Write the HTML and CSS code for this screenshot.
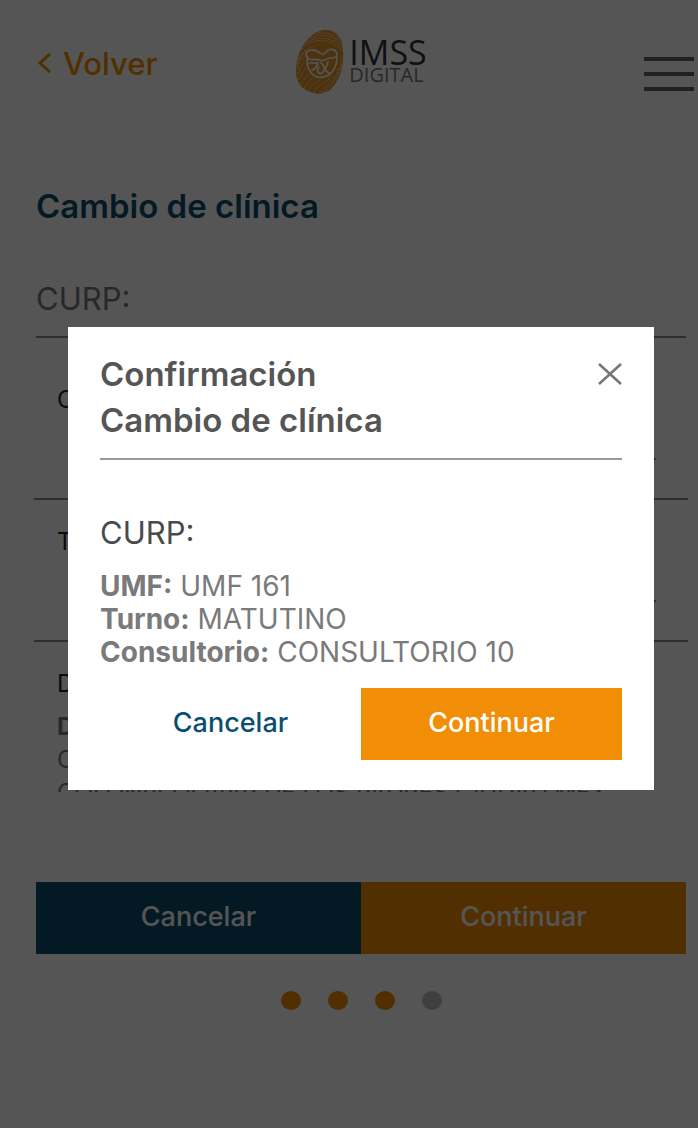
FILE: index.html
```html
<!DOCTYPE html>
<html lang="es">
	<head>
		<meta charset="utf-8">
		<meta name="viewport" content="width=device-width, initial-scale=1.0">
		<title>IMSS Digital - Cambio de clínica</title>
		<link rel="stylesheet" href="styles.css">
	</head>
	<body>
		<header class="topbar">
			<a class="back" href="#">
				<svg width="14" height="20" viewBox="0 0 14 20" aria-hidden="true"><path d="M12 1L2 10l10 9" fill="none" stroke="currentColor" stroke-width="3"/></svg>
				Volver
			</a>
			<div class="logo">
				<svg class="logo-print" width="50" height="66" viewBox="0 0 50 66" aria-hidden="true">
					<defs>
						<clipPath id="finger"><path d="M29 1C39 0 48 7 48 22c1 14-2 25-8 33-4 6-8 9-11 8-3 2-6 3-9 1C8 63 0 53 1 40 2 22 13 3 29 1z"/></clipPath>
					</defs>
					<g clip-path="url(#finger)">
						<rect width="50" height="66" fill="#e8962a"/>
						<g fill="none" stroke="#fbe3bd" stroke-width="0.8" stroke-dasharray="5 1 3 1">
							<path d="M12 8c12-7 25-5 35 4"/>
							<path d="M10 12c12-9 28-7 38 4"/>
							<path d="M8 16c12-11 31-8 41 4"/>
							<path d="M6 21c12-15 33-11 43 3"/>
							<path d="M3 31c6-10 10-12 15-14"/>
							<path d="M2 36c2-7 4-10 9-14"/>
							<path d="M2 41c1-6 3-11 8-14"/>
							<path d="M2 46c3-5 4-10 8-14"/>
							<path d="M3 51c4-6 6-9 8-13"/>
							<path d="M5 56c4-6 7-9 9-12"/>
							<path d="M9 60c3-6 5-8 9-12"/>
							<path d="M13 63c3-7 7-9 12-12"/>
							<path d="M18 65c4-9 10-9 18-17"/>
							<path d="M24 65c5-8 14-10 20-25"/>
							<path d="M30 63c7-7 14-15 17-28"/>
							<path d="M44 42c2-5 3-10 3-16"/>
						</g>
					</g>
					<!-- eagle and mother -->
					<g fill="none" stroke="#fff" stroke-width="1.7" stroke-linecap="round" stroke-linejoin="round">
						<path d="M13 22c-3 2-2 6 1 8 4 2 7-1 10 1 4 2 7-1 11-2 6 0 8-2 7-5-2-4-7-5-10-2-2 3-4 4-7 2-4-3-8-4-12-2z"/>
						<path d="M12 30c0 7 2 14 8 17 5 3 10 1 14-1 5-4 8-10 8-18"/>
						<path d="M14 34h9c-1 4-3 6-6 7M26 34c5 4 4 9-1 11-3-2-3-5-1-7M33 33l-3 8 5 4"/>
					</g>
				</svg>
				<div class="logo-text">
					<span class="logo-name">IMSS</span>
					<span class="logo-sub">DIGITAL</span>
				</div>
			</div>
			<button class="hamburger" type="button" aria-label="Menú">
				<span></span>
				<span></span>
				<span></span>
			</button>
		</header>

		<main class="page">
			<h1 class="page-title">Cambio de clínica</h1>
			<p class="curp page-curp">CURP:</p>

			<div class="list">
				<div class="item">
					<label for="clinica">Clínica</label>
					<select id="clinica"></select>
				</div>
				<div class="item">
					<label for="turno">Turno</label>
					<select id="turno"></select>
				</div>
				<div class="item">
					<h2 class="item-title">Datos de la clínica</h2>
					<p class="address"><b>Dirección:</b><br>CALLE AV TOLUCA<br>COLONIA OLIVAR DE LOS PADRES CIUDAD MEX</p>
				</div>
			</div>

			<div class="actions page-actions">
				<button class="btn btn-blue" type="button">Cancelar</button>
				<button class="btn btn-orange" type="button">Continuar</button>
			</div>

			<div class="steps">
				<span class="dot"></span>
				<span class="dot"></span>
				<span class="dot"></span>
				<span class="dot dot-off"></span>
			</div>
		</main>

		<div class="overlay">
			<div class="modal" role="dialog" aria-modal="true" aria-labelledby="modal-title">
				<div class="modal-header">
					<h2 class="modal-title" id="modal-title">Confirmación<br>Cambio de clínica</h2>
					<button class="close" type="button" aria-label="Cerrar">
						<svg width="24" height="22" viewBox="0 0 24 22" aria-hidden="true"><path d="M1 1l22 20M23 1L1 21" stroke="currentColor" stroke-width="2.6"/></svg>
					</button>
				</div>
				<p class="curp modal-curp">CURP:</p>
				<p class="details">
					<b>UMF:</b> UMF 161<br>
					<b>Turno:</b> MATUTINO<br>
					<b>Consultorio:</b> CONSULTORIO 10
				</p>
				<div class="actions">
					<button class="btn btn-plain" type="button">Cancelar</button>
					<button class="btn btn-orange" type="button">Continuar</button>
				</div>
			</div>
		</div>
	</body>
</html>
```

FILE: styles.css
```css
* {
	margin:0;
	padding:0;
	box-sizing: border-box;
}
body {
	font-family: Inter, "Liberation Sans", sans-serif;
	font-size: 27px;
	line-height: 33px;
	color: #7a7a7a;
	background-color: #fff;
}
button, select {
	font-family: inherit;
	font-size: inherit;
	border: none;
	background: none;
}

/* header */
.topbar {
	display: grid;
	grid-template-columns: 1fr auto 1fr;
	align-items: center;
	padding: 29px 4px 0 28px;
}
.back {
	display: flex;
	align-items: center;
	gap: 11px;
	padding: 2px 0 0 10px;
	font-size: 31px;
	font-weight: 500;
	color: #f28e05;
	text-decoration: none;
}
.logo {
	display: flex;
	align-items: center;
	gap: 4px;
}
.logo-text {
	display: flex;
	flex-direction: column;
	padding-bottom: 4px;
	font-family: "Open Sans", sans-serif;
}
.logo-name {
	font-size: 34px;
	line-height: 30px;
	color: #333;
}
.logo-sub {
	font-size: 20px;
	line-height: 16px;
	color: #777;
}
.hamburger {
	display: flex;
	flex-direction: column;
	gap: 11px;
	width: 50px;
	padding-bottom: 4px;
	justify-self: end;
	align-self: end;
}
.hamburger span {
	height: 4px;
	background-color: #646464;
}

/* page */
.page {
	padding: 88px 12px 40px 36px;
}
.page-title {
	font-size: 33px;
	line-height: 46px;
	font-weight: 600;
	color: #0b4f70;
}
.curp {
	font-size: 31px;
	line-height: 46px;
}
.page-curp {
	margin-top: 47px;
	padding-bottom: 14px;
	border-bottom: 2px solid #8a8a8a;
}
.list {
	height: 454px;
	margin: 0 -2px;
	padding-top: 20px;
	overflow: hidden;
}
.item {
	padding: 25px 32px 38px 23px;
	border-bottom: 2px solid #8a8a8a;
}
.item label, .item-title {
	display: block;
	font-size: 24px;
	font-weight: 400;
	line-height: 33px;
	color: #222;
}
.item select {
	display: block;
	width: calc(100% - 12px);
	height: 44px;
	margin-left: 12px;
	border-bottom: 2px solid #8a8a8a;
}
.address {
	margin-top: 10px;
	font-size: 24px;
}

/* buttons */
.actions {
	display: flex;
}
.page-actions {
	margin-top: 90px;
}
.btn {
	flex: 1;
	height: 72px;
	padding-bottom: 4px;
	font-weight: 500;
	color: #fff;
}
.btn-blue {
	background-color: #0b4f70;
}
.btn-orange {
	background-color: #f28e05;
}
.btn-plain {
	color: #0b4f70;
}
.steps {
	display: flex;
	justify-content: center;
	gap: 27px;
	margin-top: 37px;
}
.dot {
	width: 20px;
	height: 19px;
	border-radius: 50%;
	background-color: #f28e05;
}
.dot-off {
	background-color: #bdbdbd;
}

/* confirmation */
.overlay {
	position: fixed;
	top: 0;
	right: 0;
	bottom: 0;
	left: 0;
	display: flex;
	align-items: center;
	padding: 0 44px 11px 68px;
	background-color: rgba(0,0,0,0.667);
}
.modal {
	flex: 1;
	padding: 24px 32px 30px;
	background-color: #fff;
}
.modal-header {
	display: flex;
	justify-content: space-between;
	align-items: flex-start;
	padding-bottom: 15px;
	border-bottom: 2px solid #999;
}
.modal-title {
	font-size: 33px;
	line-height: 46px;
	font-weight: 600;
	color: #555;
}
.close {
	display: flex;
	align-items: center;
	height: 46px;
	color: #777;
}
.modal-curp {
	margin-top: 50px;
	color: #4a4a4a;
}
.details {
	margin: 14px 0 19px;
	font-size: 28px;
}
```
